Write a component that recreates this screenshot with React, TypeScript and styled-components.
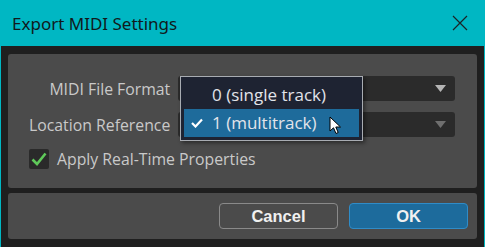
import React from 'react';
import styled, { createGlobalStyle } from 'styled-components';

const UI_FONT = '"Open Sans", "Liberation Sans", sans-serif';

const GlobalStyle = createGlobalStyle`
  html, body {
    margin: 0;
    padding: 0;
    width: 485px;
    height: 247px;
    overflow: hidden;
    background: #1f1f1f;
  }
`;

const Window = styled.div`
  width: 485px;
  height: 247px;
  box-sizing: border-box;
  border-left: 1px solid #00b7c3;
  border-right: 1px solid #00b7c3;
  display: flex;
  flex-direction: column;
  background: #1f1f1f;
  font-family: ${UI_FONT};
`;

const TitleBar = styled.div`
  height: 46px;
  flex: 0 0 46px;
  background: #00b7c3;
  display: flex;
  align-items: center;
  justify-content: space-between;
  padding: 0 17px 0 12px;
  margin: 0 -1px;
`;

const Title = styled.span`
  font-family: "Noto Sans", "Open Sans", sans-serif;
  font-size: 17px;
  color: #111a1c;
`;

const CloseButton = styled.svg`
  width: 16px;
  height: 16px;
`;

const Body = styled.div`
  flex: 1;
  padding: 8px 7px 8px 7px;
  display: flex;
  flex-direction: column;
  gap: 5px;
`;

const Panel = styled.div<{ $height: number }>`
  height: ${({ $height }) => $height}px;
  background: #4b4b4b;
  border-radius: 3px;
  box-sizing: border-box;
`;

const Form = styled.div`
  position: relative;
  display: grid;
  grid-template-columns: auto 1fr;
  column-gap: 8px;
  row-gap: 11px;
  align-items: center;
  padding: 22px 22px 0 21px;
`;

const Label = styled.label`
  justify-self: end;
  font-size: 15.8px;
  color: #c9c9c9;
  white-space: nowrap;
`;

const Combo = styled.div<{ $dim?: boolean }>`
  height: 25px;
  background: #2b2b2b;
  border-radius: 3px;
  display: flex;
  align-items: center;
  justify-content: flex-end;
  padding-right: 9px;
  color: ${({ $dim }) => ($dim ? '#6f6f6f' : '#b5b5b5')};
`;

const CheckRow = styled.div`
  grid-column: 1 / 3;
  display: flex;
  align-items: center;
  gap: 8px;
`;

const CheckBox = styled.div`
  width: 20px;
  height: 20px;
  background: #2a2a2a;
  border-radius: 2px;
  display: flex;
  align-items: center;
  justify-content: center;
`;

const Popup = styled.div`
  position: absolute;
  left: 172px;
  top: 22px;
  width: 183px;
  height: 65px;
  box-sizing: border-box;
  border: 1px solid #a8acb2;
  background: #1e2332;
  padding: 3px;
  display: flex;
  flex-direction: column;
  box-shadow: 2px 2px 4px rgba(0, 0, 0, 0.45);
`;

const MenuItem = styled.div<{ $selected?: boolean }>`
  flex: 1;
  display: flex;
  align-items: center;
  padding-left: ${({ $selected }) => ($selected ? '7px' : '28px')};
  gap: 9px;
  font-size: 17px;
  color: #e2e4ea;
  background: ${({ $selected }) => ($selected ? '#1e6b9b' : 'transparent')};
`;

const Cursor = styled.svg`
  position: absolute;
  left: 321px;
  top: 62px;
  width: 14px;
  height: 20px;
`;

const Footer = styled.div`
  display: flex;
  justify-content: flex-end;
  gap: 11px;
  padding: 10px 9px 0 0;
`;

const Button = styled.button<{ $primary?: boolean }>`
  width: 119px;
  height: 26px;
  border-radius: 4px;
  box-sizing: border-box;
  font-family: "Liberation Sans", Arial, sans-serif;
  font-weight: bold;
  font-size: 16.5px;
  color: #f0f0f0;
  border: 1px solid ${({ $primary }) => ($primary ? '#2f8cc8' : '#8a8a8a')};
  background: ${({ $primary }) => ($primary ? '#1d6b9c' : '#4b4b4b')};
  padding: 0;
`;

const Arrow = () => (
  <svg width="11" height="7" viewBox="0 0 11 7">
    <path d="M0 0 H11 L5.5 7 Z" fill="currentColor" />
  </svg>
);

export default function App() {
  return (
    <>
      <GlobalStyle />
      <Window>
        <TitleBar>
          <Title>Export MIDI Settings</Title>
          <CloseButton viewBox="0 0 16 16">
            <path d="M1 1 L15 15 M15 1 L1 15" stroke="#1a2426" strokeWidth="1.2" />
          </CloseButton>
        </TitleBar>
        <Body>
          <Panel $height={134}>
            <Form>
              <Label>MIDI File Format</Label>
              <Combo>
                <Arrow />
              </Combo>
              <Label>Location Reference</Label>
              <Combo $dim>
                <Arrow />
              </Combo>
              <CheckRow>
                <CheckBox>
                  <svg width="16" height="14" viewBox="0 0 16 14">
                    <path d="M1.5 7.5 L6 12 L14.5 1.5" fill="none" stroke="#5fc95a" strokeWidth="2.6" />
                  </svg>
                </CheckBox>
                <Label>Apply Real-Time Properties</Label>
              </CheckRow>
              <Popup>
                <MenuItem>0 (single track)</MenuItem>
                <MenuItem $selected>
                  <svg width="12" height="10" viewBox="0 0 12 10">
                    <path d="M1 5 L4.5 8.5 L11 1.5" fill="none" stroke="#ffffff" strokeWidth="2.2" />
                  </svg>
                  1 (multitrack)
                </MenuItem>
              </Popup>
              <Cursor viewBox="0 0 14 20">
                <path
                  d="M1 1 L1 15 L4.5 11.8 L7 17.5 L9.2 16.5 L6.8 11 L11.5 11 Z"
                  fill="#ffffff"
                  stroke="#000000"
                  strokeWidth="1"
                  strokeLinejoin="round"
                />
              </Cursor>
            </Form>
          </Panel>
          <Panel $height={46}>
            <Footer>
              <Button>Cancel</Button>
              <Button $primary>OK</Button>
            </Footer>
          </Panel>
        </Body>
      </Window>
    </>
  );
}
